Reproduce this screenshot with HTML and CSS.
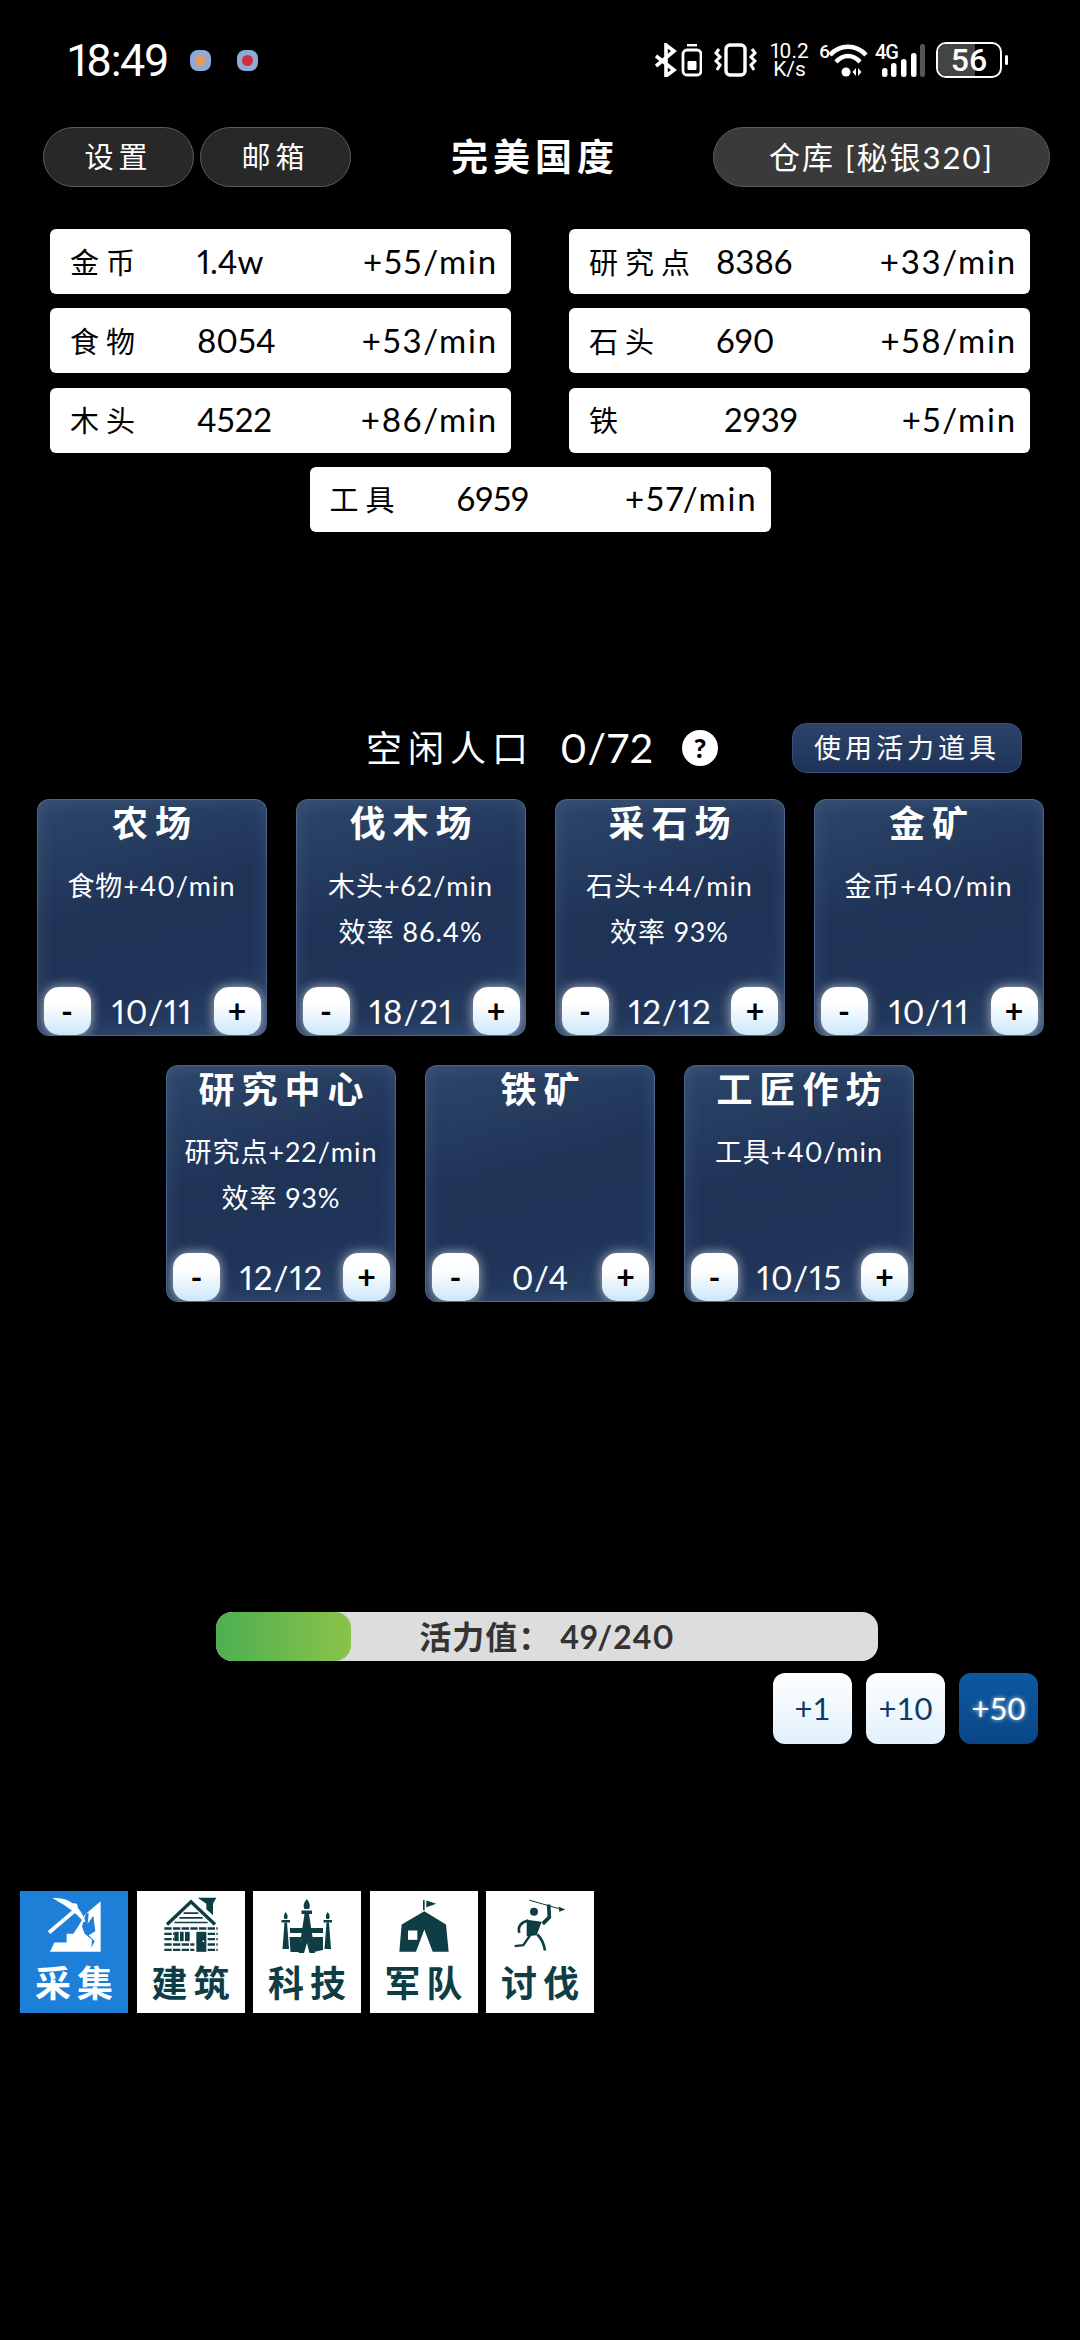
FILE: index.html
```html
<!DOCTYPE html>
<html lang="zh-CN">
<head>
  <meta charset="UTF-8">
  <meta name="viewport" content="width=device-width, initial-scale=1.0">
  <title>完美国度</title>
  <link rel="stylesheet" href="styles.css">
</head>
<body>
  <!-- status bar -->
  <div class="status">
    <div class="status-left">
      <span class="clock">18:49</span>
      <span class="app-dot"><i class="orange"></i></span>
      <span class="app-dot"><i class="red"></i></span>
    </div>
    <div class="status-right">
      <svg class="ic-bt" viewBox="0 0 47 34" width="47" height="34">
        <path d="M1 13 L19 27 L11 33 V2 L19 8 L1 23" fill="none" stroke="#fff" stroke-width="3.6"/>
        <rect x="28" y="7" width="18" height="25" rx="4" fill="none" stroke="#fff" stroke-width="2.8"/>
        <rect x="32" y="1" width="10" height="2.4" fill="#fff"/>
        <rect x="32.500" y="18" width="9" height="9" rx="1" fill="#fff"/>
      </svg>
      <svg class="ic-vib" viewBox="0 0 43 34" width="43" height="34">
        <rect x="12" y="2" width="19" height="30" rx="4" fill="none" stroke="#fff" stroke-width="3.4"/>
        <path d="M5 6 L2 10 L6 14 L2 18 L6 22 L3 27" fill="none" stroke="#fff" stroke-width="3"/>
        <path d="M38 6 L41 10 L37 14 L41 18 L37 22 L40 27" fill="none" stroke="#fff" stroke-width="3"/>
      </svg>
      <div class="speed">10.2
K/s</div>
      <span class="wifi-gen">6</span>
      <svg class="ic-wifi" viewBox="0 0 40 34" width="40" height="34">
        <path d="M2 12 C12 1 28 1 38 12" fill="none" stroke="#fff" stroke-width="4.4"/>
        <path d="M8 19 C15 11 25 11 32 19" fill="none" stroke="#fff" stroke-width="4.4"/>
        <circle cx="18" cy="29" r="4.500" fill="#fff"/>
        <path d="M28 25 L24.500 29 L28 33 Z M30 25 L33.500 29 L30 33 Z" fill="#fff"/>
      </svg>
      <div class="signal">
        <span class="net-gen">4G</span>
        <svg viewBox="0 0 52 34" width="52" height="34">
          <rect x="7" y="25" width="5.500" height="9" rx="2.500" fill="#fff"/>
          <rect x="16" y="20" width="5.500" height="14" rx="2.500" fill="#fff"/>
          <rect x="26" y="16" width="5.500" height="18" rx="2.500" fill="#fff"/>
          <rect x="36" y="10" width="5.500" height="24" rx="2.500" fill="#fff"/>
          <rect x="45" y="1" width="5" height="33" rx="2.500" fill="#555"/>
        </svg>
      </div>
      <div class="battery"><i class="battery-fill"></i><span>56</span></div>
      <i class="battery-nub"></i>
    </div>
  </div>

  <!-- top buttons -->
  <div class="topbar">
    <button class="pill">设置</button>
    <button class="pill">邮箱</button>
    <div class="game-title">完美国度</div>
    <button class="pill pill-wide">仓库 [秘银320]</button>
  </div>

  <!-- resources -->
  <div class="resources">
    <div class="res"><span class="res-name">金币</span><span class="res-value">1.4w</span><span class="res-rate">+55/min</span></div>
    <div class="res"><span class="res-name">研究点</span><span class="res-value">8386</span><span class="res-rate">+33/min</span></div>
    <div class="res"><span class="res-name">食物</span><span class="res-value">8054</span><span class="res-rate">+53/min</span></div>
    <div class="res"><span class="res-name">石头</span><span class="res-value">690</span><span class="res-rate">+58/min</span></div>
    <div class="res"><span class="res-name">木头</span><span class="res-value">4522</span><span class="res-rate">+86/min</span></div>
    <div class="res res-short"><span class="res-name">铁</span><span class="res-value">2939</span><span class="res-rate">+5/min</span></div>
    <div class="res"><span class="res-name">工具</span><span class="res-value">6959</span><span class="res-rate">+57/min</span></div>
  </div>

  <!-- population -->
  <div class="population">
    <span class="pop-label">空闲人口</span>
    <span class="pop-value">0/72</span>
    <span class="help">?</span>
    <button class="use-item">使用活力道具</button>
  </div>

  <!-- buildings -->
  <div class="buildings">
    <div class="card">
      <div class="card-title">农场</div>
      <div class="card-line">食物+40/min</div>
      <div class="controls"><button class="step">-</button><span class="count">10/11</span><button class="step">+</button></div>
    </div>
    <div class="card">
      <div class="card-title">伐木场</div>
      <div class="card-line">木头+62/min</div>
      <div class="card-line">效率 86.4%</div>
      <div class="controls"><button class="step">-</button><span class="count">18/21</span><button class="step">+</button></div>
    </div>
    <div class="card">
      <div class="card-title">采石场</div>
      <div class="card-line">石头+44/min</div>
      <div class="card-line">效率 93%</div>
      <div class="controls"><button class="step">-</button><span class="count">12/12</span><button class="step">+</button></div>
    </div>
    <div class="card">
      <div class="card-title">金矿</div>
      <div class="card-line">金币+40/min</div>
      <div class="controls"><button class="step">-</button><span class="count">10/11</span><button class="step">+</button></div>
    </div>
    <div class="card">
      <div class="card-title">研究中心</div>
      <div class="card-line">研究点+22/min</div>
      <div class="card-line">效率 93%</div>
      <div class="controls"><button class="step">-</button><span class="count">12/12</span><button class="step">+</button></div>
    </div>
    <div class="card">
      <div class="card-title">铁矿</div>
      <div class="controls"><button class="step">-</button><span class="count">0/4</span><button class="step">+</button></div>
    </div>
    <div class="card">
      <div class="card-title">工匠作坊</div>
      <div class="card-line">工具+40/min</div>
      <div class="controls"><button class="step">-</button><span class="count">10/15</span><button class="step">+</button></div>
    </div>
  </div>

  <!-- energy -->
  <div class="energy">
    <div class="energy-fill" style="width: 20.4%"></div>
    <span class="energy-text">活力值： 49/240</span>
  </div>
  <div class="boosts">
    <button class="boost">+1</button>
    <button class="boost">+10</button>
    <button class="boost boost-on">+50</button>
  </div>

  <!-- bottom tabs -->
  <div class="tabs">
    <div class="tab tab-on">
      <svg viewBox="30 30 324 200" width="108" height="67">
        <path d="M272 60 V212 H120 L133 184 H170 V158 H190 L205 135 L225 100 Z" fill="#fff"/>
        <path d="M228 96 L236 96 L233 128 L250 104 L256 150 L236 162 L254 180 L244 200 L246 176 L224 158 L216 136 Z" fill="#1e7fd8"/>
        <path d="M117 154 L195 88" stroke="#fff" stroke-width="11"/>
        <path d="M136 53 C178 52 210 80 224 122 C200 92 170 72 136 53 Z" fill="#fff" stroke="#fff" stroke-width="5"/>
        <circle cx="193" cy="76" r="10" fill="#fff"/>
      </svg>
      <span>采集</span>
    </div>
    <div class="tab">
      <svg viewBox="378 30 324 200" width="108" height="67">
        <path d="M468 130 L540 62 L612 130" fill="none" stroke="#0f3d45" stroke-width="10"/>
        <path d="M560 50 H616 L606 68 V102 L586 84 V68 Z" fill="#0f3d45"/>
        <path d="M518 96 H562 M505 110 H575 M490 124 H590" stroke="#0f3d45" stroke-width="5"/>
        <path d="M460 142 H620 M460 158 H490 M590 158 H620 M460 174 H490 M590 174 H620 M460 190 H550 M590 190 H620 M460 206 H550 M590 206 H620" stroke="#0f3d45" stroke-width="7" stroke-dasharray="22 4"/>
        <rect x="490" y="152" width="46" height="28" fill="#0f3d45"/>
        <path d="M505 152 V180 M520 152 V180" stroke="#fff" stroke-width="4"/>
        <rect x="556" y="152" width="30" height="60" fill="#0f3d45"/>
        <circle cx="577" cy="180" r="2.500" fill="#fff"/>
      </svg>
      <span>建筑</span>
    </div>
    <div class="tab">
      <svg viewBox="0 0 108 67" width="108" height="67">
        <g fill="#0f3d45">
          <path d="M53.700 8 C57 12 57.500 15 56 18 H51.500 C50 15 50.500 12 53.700 8 Z"/>
          <rect x="48.500" y="19.500" width="10.500" height="3.500"/>
          <path d="M51.500 23 H56 L62 62 H56.500 L54 52 L51 62 H45.500 Z"/>
          <path d="M32.700 21 C35 24 35 26 34 28 H31.500 C30.500 26 30.500 24 32.700 21 Z"/>
          <rect x="28.500" y="29" width="8.500" height="2.500"/>
          <path d="M31.500 31.500 H34 L36 58 H29.500 Z"/>
          <path d="M74.700 21 C77 24 77 26 76 28 H73.500 C72.500 26 72.500 24 74.700 21 Z"/>
          <rect x="70.500" y="29" width="8.500" height="2.500"/>
          <path d="M73.500 31.500 H76 L78 58 H71.500 Z"/>
          <path d="M37 37 H50 L49 42 H37 Z M57 37 H70 V42 H58 Z"/>
          <path d="M36.500 46 H48 L47 61 H37.500 Z M59 46 H70 V59 L60.500 61 Z"/>
        </g>
      </svg>
      <span>科技</span>
    </div>
    <div class="tab">
      <svg viewBox="177 30 324 200" width="108" height="67">
        <path d="M340 90 L405 130 L413 212 H365 L340 145 L315 212 H265 L272 130 Z" fill="#0f3d45"/>
        <rect x="291" y="148" width="28" height="28" fill="#fff"/>
        <rect x="336" y="57" width="5" height="30" fill="#0f3d45"/>
        <path d="M346 58 L376 68 L346 78 Z" fill="#0f3d45"/>
      </svg>
      <span>军队</span>
    </div>
    <div class="tab">
      <svg viewBox="528 30 324 200" width="108" height="67">
        <circle cx="672" cy="92" r="12" fill="#0f3d45"/>
        <path d="M658 57 L745 82" stroke="#0f3d45" stroke-width="3"/>
        <path d="M745 76 L766 85 L748 92 Z" fill="#0f3d45"/>
        <path d="M716 70 L718 108 L698 128" fill="none" stroke="#0f3d45" stroke-width="11"/>
        <path d="M655 118 C635 122 622 135 628 155" fill="none" stroke="#0f3d45" stroke-width="8"/>
        <path d="M650 116 L695 122 L680 162 L650 165 Z" fill="#0f3d45"/>
        <path d="M662 160 L640 192 L614 195" fill="none" stroke="#0f3d45" stroke-width="7"/>
        <path d="M682 160 C698 175 702 190 705 208" fill="none" stroke="#0f3d45" stroke-width="8"/>
      </svg>
      <span>讨伐</span>
    </div>
  </div>
</body>
</html>
```

FILE: styles.css
```css
* {
  box-sizing: border-box;
}

body {
  margin: 0;
  height: 2340px;
  overflow: hidden;
  background-color: #000;
  color: #fff;
  font-family: Lato, "Noto Sans CJK SC", sans-serif;
  font-variant-numeric: proportional-nums;
}

button {
  font-family: inherit;
  color: inherit;
  cursor: pointer;
}

/* status bar */
.status {
  display: flex;
  justify-content: space-between;
  align-items: center;
  height: 36px;
  margin-top: 42px;
  padding: 0 72px 0 68px;
  font-family: Roboto, sans-serif;
}

.status-left {
  display: flex;
  align-items: center;
}

.clock {
  width: 122px;
  font-size: 45px;
  letter-spacing: -1.5px;
}

.app-dot {
  display: flex;
  justify-content: center;
  align-items: center;
  width: 21px;
  height: 21px;
  margin-right: 26px;
  border-radius: 8px;
  background-color: #8eaad6;
}

.app-dot i {
  width: 11px;
  height: 11px;
  border-radius: 50%;
}

.app-dot .orange {
  background-color: #e89a5c;
}

.app-dot .red {
  background-color: #cf2f3e;
}

.status-right {
  display: flex;
  align-items: center;
}

.ic-bt {
  margin-right: 12px;
}

.ic-vib {
  margin-right: 12px;
}

.speed {
  width: 41px;
  font-size: 21px;
  line-height: 18px;
  text-align: center;
  white-space: pre-line;
}

.wifi-gen {
  width: 9px;
  margin-left: 9px;
  font-size: 19px;
  font-weight: 500;
  align-self: flex-start;
  line-height: 20px;
}

.ic-wifi {
  margin-right: 7px;
}

.signal {
  display: flex;
  position: relative;
  width: 52px;
  margin-right: 9px;
}

.net-gen {
  position: absolute;
  left: 0;
  top: -3px;
  font-size: 20px;
  font-weight: 500;
  letter-spacing: -1px;
}

.battery {
  display: flex;
  justify-content: center;
  align-items: center;
  position: relative;
  width: 66px;
  height: 36px;
  border: 2px solid #fff;
  border-radius: 10px;
  overflow: hidden;
  font-size: 32px;
  font-weight: 500;
}

.battery span {
  position: relative;
}

.battery-fill {
  position: absolute;
  left: 0;
  top: 0;
  bottom: 0;
  width: 60%;
  background-color: #444;
}

.battery-nub {
  width: 3px;
  height: 10px;
  margin-left: 3px;
  border-radius: 2px;
  background-color: #fff;
}

/* top bar */
.topbar {
  display: flex;
  align-items: center;
  margin-top: 49px;
  padding: 0 30px 0 43px;
}

.pill {
  width: 151px;
  height: 60px;
  margin-right: 6px;
  padding: 0 0 4px;
  border: 1px solid #5c5c5c;
  border-radius: 30px;
  background-color: #282828;
  font-size: 29px;
  letter-spacing: 5px;
}

.pill-wide {
  width: 337px;
  margin-right: 0;
  background-color: #3a3a3a;
  font-size: 31px;
  letter-spacing: 2px;
}

.game-title {
  flex: 1;
  padding-bottom: 4px;
  text-align: center;
  font-size: 37px;
  font-weight: 700;
  letter-spacing: 5px;
}

/* resources */
.resources {
  display: flex;
  flex-wrap: wrap;
  justify-content: center;
  gap: 14.34px 58px;
  margin-top: 42px;
  padding: 0 50px;
}

.res {
  display: flex;
  align-items: center;
  width: 461px;
  height: 65px;
  padding: 0 13px 2px 20px;
  border-radius: 6px;
  background-color: #fff;
  color: #000;
  font-size: 33px;
}

.res-name {
  width: 127px;
  font-size: 29px;
  letter-spacing: 7px;
  white-space: nowrap;
}

.res-short .res-value {
  margin-left: 8px;
}

.res-rate {
  margin-left: auto;
  letter-spacing: 1.8px;
}

/* population */
.population {
  display: flex;
  align-items: center;
  height: 50px;
  margin-top: 191px;
  padding-left: 366px;
}

.pop-label {
  width: 194px;
  padding-bottom: 4px;
  font-size: 36px;
  letter-spacing: 6px;
  white-space: nowrap;
}

.pop-value {
  width: 122px;
  font-size: 41px;
  letter-spacing: 1px;
}

.help {
  width: 36px;
  height: 36px;
  border-radius: 50%;
  background-color: #fff;
  color: #000;
  font-size: 27px;
  font-weight: 900;
  line-height: 36px;
  text-align: center;
}

.use-item {
  width: 230px;
  height: 50px;
  margin-left: 74px;
  padding: 0 0 2px;
  border: 1px solid #34507a;
  border-radius: 14px;
  background: linear-gradient(#2c4468, #1f3358);
  font-size: 27px;
  letter-spacing: 4px;
}

/* building cards */
.buildings {
  display: flex;
  flex-wrap: wrap;
  justify-content: center;
  gap: 29px;
  margin-top: 26px;
  padding: 0 36px;
}

.card {
  display: flex;
  flex-direction: column;
  align-items: center;
  width: 230px;
  height: 237px;
  border: 1px solid rgba(120, 150, 190, 0.45);
  border-radius: 12px;
  overflow: hidden;
  background: linear-gradient(165deg, #2d4669 0%, #1f3357 45%, #203459 75%, #2a4468 100%);
  box-shadow: inset 0 0 18px rgba(110, 140, 180, 0.25);
}

.card-title {
  height: 50px;
  margin-bottom: 16px;
  margin-top: -2px;
  padding-left: 7px;
  font-size: 36px;
  font-weight: 700;
  letter-spacing: 7px;
  line-height: 50px;
  white-space: nowrap;
}

.card-line {
  height: 46px;
  font-size: 27px;
  line-height: 44px;
  letter-spacing: 1px;
  white-space: nowrap;
}

.controls {
  display: flex;
  justify-content: space-between;
  align-items: center;
  align-self: stretch;
  margin-top: auto;
  padding: 0 5px 0 6px;
}

.step {
  width: 47px;
  height: 48px;
  padding: 0;
  border: none;
  border-radius: 15px;
  background: linear-gradient(#fff 35%, #cbe7fa);
  box-shadow: 0 0 12px rgba(255, 255, 255, 0.65);
  color: #000;
  font-size: 32px;
  font-weight: 700;
  line-height: 1;
}

.count {
  font-size: 33px;
  letter-spacing: 1px;
}

/* energy bar */
.energy {
  display: flex;
  justify-content: center;
  align-items: center;
  position: relative;
  width: 662px;
  height: 49px;
  margin: 310px 0 0 216px;
  border-radius: 16px;
  overflow: hidden;
  background-color: #ddd;
  color: #333;
}

.energy-fill {
  position: absolute;
  left: 0;
  top: 0;
  bottom: 0;
  border-radius: 16px;
  background: linear-gradient(90deg, #4caf50, #8bc34a);
}

.energy-text {
  position: relative;
  padding-bottom: 3px;
  font-size: 32px;
  font-weight: 700;
  letter-spacing: 1px;
  white-space: pre;
}

.boosts {
  display: flex;
  justify-content: flex-end;
  gap: 14px;
  margin-top: 12px;
  padding-right: 42px;
}

.boost {
  width: 79px;
  height: 71px;
  padding: 0;
  border: none;
  border-radius: 12px;
  background: linear-gradient(#fff, #e1f0fc);
  color: #0f3a66;
  font-size: 31px;
}

.boost-on {
  background: linear-gradient(#0b5aa3, #0a4686);
  color: #fff;
  text-shadow: 0 0 4px rgba(255, 255, 255, 0.8);
}

/* bottom tabs */
.tabs {
  display: flex;
  gap: 8.5px;
  margin-top: 147px;
  padding-left: 20px;
}

.tab {
  display: flex;
  flex-direction: column;
  align-items: center;
  width: 108px;
  height: 122px;
  background-color: #fff;
  color: #0f3d45;
  font-size: 36px;
  font-weight: 700;
  letter-spacing: 6px;
  line-height: 50px;
}

.tab span {
  padding-left: 6px;
  white-space: nowrap;
}

.tab-on {
  background-color: #1e7fd8;
  color: #fff;
}
```
